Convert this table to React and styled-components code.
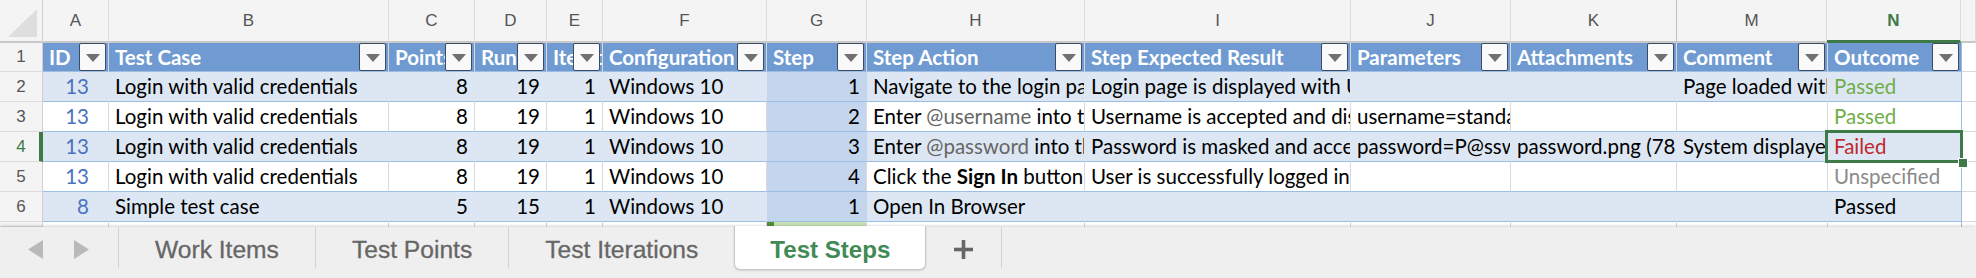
import React from 'react';
import styled, { createGlobalStyle } from 'styled-components';

const GlobalStyle = createGlobalStyle`
  html, body { margin: 0; padding: 0; background: #fff; overflow: hidden; }
  body { width: 1976px; height: 278px; }
`;

const BAND = '#dde7f3';
const LINE = '#9ebde3';
const GRID = '#d9d9d9';
const GREEN = '#3d7a48';

const cols = [
  { id: 'A', w: 66, title: 'ID', align: 'right', pr: 19 },
  { id: 'B', w: 280, title: 'Test Case' },
  { id: 'C', w: 86, title: 'Points', align: 'right' },
  { id: 'D', w: 72, title: 'Run', align: 'right' },
  { id: 'E', w: 56, title: 'Iteration', align: 'right' },
  { id: 'F', w: 164, title: 'Configuration' },
  { id: 'G', w: 100, title: 'Step', align: 'right', step: true },
  { id: 'H', w: 218, title: 'Step Action' },
  { id: 'I', w: 266, title: 'Step Expected Result' },
  { id: 'J', w: 160, title: 'Parameters' },
  { id: 'K', w: 166, title: 'Attachments' },
  { id: 'M', w: 151, title: 'Comment', hiddenBefore: true },
  { id: 'N', w: 134, title: 'Outcome', edge: true, active: true },
];

const Param = styled.span`color: #666;`;
const B = styled.b`font-weight: 700;`;

const rows = [
  {
    n: 2, band: true,
    cells: ['13', 'Login with valid credentials', '8', '19', '1', 'Windows 10', '1',
      'Navigate to the login page', 'Login page is displayed with Username and Password fields',
      '', '', 'Page loaded with no errors', 'Passed'],
    tone: 'pass',
  },
  {
    n: 3,
    cells: ['13', 'Login with valid credentials', '8', '19', '1', 'Windows 10', '2',
      <>Enter <Param>@username</Param> into the Username field</>,
      'Username is accepted and displayed', 'username=standard_user', '', '', 'Passed'],
    tone: 'pass',
  },
  {
    n: 4, band: true, selected: true,
    cells: ['13', 'Login with valid credentials', '8', '19', '1', 'Windows 10', '3',
      <>Enter <Param>@password</Param> into the Password field</>,
      'Password is masked and accepted', 'password=P@ssw0rd', 'password.png (78 KB)',
      'System displayed an error', 'Failed'],
    tone: 'fail',
  },
  {
    n: 5,
    cells: ['13', 'Login with valid credentials', '8', '19', '1', 'Windows 10', '4',
      <>Click the <B>Sign In</B> button</>, 'User is successfully logged in and redirected',
      '', '', '', 'Unspecified'],
    tone: 'none',
  },
  {
    n: 6, band: true, spillH: true,
    cells: ['8', 'Simple test case', '5', '15', '1', 'Windows 10', '1',
      'Open In Browser', '', '', '', '', 'Passed'],
    tone: 'plain',
  },
];

const tones = { pass: '#70ad47', fail: '#c0282d', none: '#8a8a8a', plain: '#000', id: '#4a72c0' };

const Page = styled.div`
  width: 1976px;
  height: 278px;
  display: flex;
  flex-direction: column;
  overflow: hidden;
`;

const Sheet = styled.div`
  display: flex;
  flex-direction: column;
  font-family: Lato, "Noto Sans", sans-serif;
  font-size: 20.5px;
`;

const Row = styled.div`
  --grid: ${p => (p.$band ? 'transparent' : GRID)};
  display: flex;
  height: ${p => p.$h || 30}px;
  background: ${p => (p.$band ? BAND : '#fff')};
`;

const Corner = styled.div`
  flex: 0 0 43px;
  box-sizing: border-box;
  background: #f4f4f4;
  border-right: 1px solid #cfcfcf;
  border-bottom: 2px solid #c8c8c8;
  display: flex;
  align-items: flex-end;
  justify-content: flex-end;
  padding: 0 5px 4px 0;
`;

const ColHead = styled.div`
  flex: ${p => (p.$w ? `0 0 ${p.$w}px` : '1 1 auto')};
  box-sizing: border-box;
  background: #f4f4f4;
  border-right: 1px solid #dcdcdc;
  border-left: ${p => (p.$hiddenBefore ? '1px solid #bdbdbd' : 'none')};
  margin-left: ${p => (p.$hiddenBefore ? '-1px' : '0')};
  border-bottom: ${p => (p.$active ? `3px solid ${GREEN}` : '2px solid #c8c8c8')};
  font-family: "Liberation Sans", Arial, sans-serif;
  font-size: 17px;
  color: ${p => (p.$active ? GREEN : '#555')};
  font-weight: ${p => (p.$active ? 700 : 400)};
  display: flex;
  align-items: center;
  justify-content: center;
  padding-top: ${p => (p.$active ? 1 : 0)}px;
`;

const RowHead = styled.div`
  flex: 0 0 43px;
  box-sizing: border-box;
  background: #f4f4f4;
  border-right: ${p => (p.$active ? `4px solid ${GREEN}` : '1px solid #cfcfcf')};
  border-bottom: 1px solid #dcdcdc;
  font-family: "Liberation Sans", Arial, sans-serif;
  font-size: 17px;
  color: ${p => (p.$active ? GREEN : '#555')};
  display: flex;
  align-items: center;
  justify-content: center;
  padding-left: ${p => (p.$active ? 3 : 0)}px;
`;

const Cell = styled.div`
  flex: 0 0 ${p => p.$w}px;
  box-sizing: border-box;
  position: relative;
  line-height: ${p => (p.$head ? 28 : 29)}px;
  padding: 0 ${p => p.$pr ?? 6}px 0 6px;
  text-align: ${p => p.$align || 'left'};
  white-space: nowrap;
  overflow: ${p => (p.$spill ? 'visible' : 'hidden')};
  border-right: 1px solid ${p => (p.$edge ? LINE : 'var(--grid)')};
  border-bottom: 1px solid ${LINE};
  background: ${p => (p.$head ? '#6f9bd2' : p.$step ? '#c3d6ed' : 'transparent')};
  color: ${p => (p.$head ? '#fff' : tones[p.$tone] || '#000')};
  font-weight: ${p => (p.$head ? 700 : 400)};

  ${p => p.$selected && `
    &::after {
      content: '';
      position: absolute;
      left: -3px; top: -2px; right: -2px; bottom: -2px;
      border: 3px solid ${GREEN};
      z-index: 3;
    }
    &::before {
      content: '';
      position: absolute;
      right: -7px; bottom: -7px;
      width: 8px; height: 8px;
      background: ${GREEN};
      border: 1px solid #fff;
      z-index: 4;
    }
  `}
`;

const Filler = styled.div`
  flex: 1 1 auto;
  background: #fff;
  border-bottom: 1px solid ${GRID};
`;

const Dropdown = styled.div`
  position: absolute;
  right: 2px;
  top: 0;
  width: 27px;
  height: 28px;
  box-sizing: border-box;
  border: 1px solid #3c4c63;
  border-radius: 2px;
  background: #f9f9f9;
  display: flex;
  align-items: center;
  justify-content: center;

  &::after {
    content: '';
    border-left: 7px solid transparent;
    border-right: 7px solid transparent;
    border-top: 8px solid #707070;
    margin-top: 1px;
  }
`;

const Peek = styled.div`
  flex: 0 0 ${p => p.$w}px;
  box-sizing: border-box;
  border-right: 1px solid ${p => (p.$edge ? LINE : GRID)};
  background: ${p => (p.$step ? '#c6e0b4' : 'transparent')};
  border-left: ${p => (p.$step ? `7px solid #4e8f3a` : 'none')};
`;

const TabBar = styled.div`
  flex: 1 1 auto;
  display: flex;
  align-items: flex-start;
  background: #efefef;
  box-shadow: 0 -1px 3px rgba(0, 0, 0, 0.18);
  position: relative;
  font-family: "Liberation Sans", Arial, sans-serif;
  font-size: 24.6px;
  color: #666;
  -webkit-text-stroke: 0.3px #666;
`;

const Arrows = styled.div`
  flex: 0 0 118px;
  height: 41px;
  display: flex;
  align-items: center;
  gap: 31px;
  padding: 4px 0 0 28px;
  box-sizing: border-box;
`;

const Tab = styled.div`
  height: 41px;
  box-sizing: border-box;
  display: flex;
  align-items: center;
  padding: 4px 36px 0 36px;
  border-left: 1px solid #d2d2d2;
  ${p => p.$active && `
    background: #fff;
    color: #418a55;
    -webkit-text-stroke: 0;
    font-weight: 700;
    font-size: 24.1px;
    padding: 4px 35px 0 35px;
    border-left-color: #c6c6c6;
    border-right: 1px solid #c6c6c6;
    border-bottom: 1px solid #c6c6c6;
    border-radius: 0 0 6px 6px;
    box-shadow: 0 1px 2px rgba(0,0,0,0.12);
    margin-top: -1px;
    height: 44px;
  `}
`;

const AddTab = styled.div`
  flex: 0 0 76px;
  height: 41px;
  display: flex;
  align-items: center;
  justify-content: center;
  padding-top: 4px;
  box-sizing: border-box;
  border-right: 1px solid #d2d2d2;
`;

const Arrow = ({ left }) => (
  <svg width="15" height="19" viewBox="0 0 15 19">
    <polygon points={left ? '15,0 0,9.5 15,19' : '0,0 15,9.5 0,19'} fill="#b9b9b9" />
  </svg>
);

const Plus = () => (
  <svg width="21" height="21" viewBox="0 0 21 21">
    <rect x="8.7" y="1" width="3.6" height="19" fill="#666" />
    <rect x="1" y="8.7" width="19" height="3.6" fill="#666" />
  </svg>
);

const CornerMark = () => (
  <svg width="29" height="28" viewBox="0 0 29 28">
    <polygon points="29,0 29,28 0,28" fill="#dedede" />
  </svg>
);

export default function App() {
  return (
    <Page>
      <GlobalStyle />
      <Sheet>
        <Row $h={43}>
          <Corner><CornerMark /></Corner>
          {cols.map(c => (
            <ColHead key={c.id} $w={c.w} $active={c.active} $hiddenBefore={c.hiddenBefore}>{c.id}</ColHead>
          ))}
          <ColHead />
        </Row>

        <Row $h={29}>
          <RowHead>1</RowHead>
          {cols.map(c => (
            <Cell key={c.id} $w={c.w} $head $edge={c.edge}>
              {c.title}
              <Dropdown />
            </Cell>
          ))}
          <Filler />
        </Row>

        {rows.map(r => (
          <Row key={r.n} $band={r.band}>
            <RowHead $active={r.selected}>{r.n}</RowHead>
            {cols.map((c, i) => {
              const last = i === cols.length - 1;
              return (
                <Cell
                  key={c.id}
                  $w={c.w}
                  $align={c.align}
                  $pr={c.pr}
                  $step={c.step}
                  $edge={c.edge}
                  $tone={i === 0 ? 'id' : last ? r.tone : undefined}
                  $spill={(r.spillH && c.id === 'H') || (last && r.selected)}
                  $selected={last && r.selected}
                >
                  {r.cells[i]}
                </Cell>
              );
            })}
            <Filler />
          </Row>
        ))}

        <Row $h={5}>
          <RowHead />
          {cols.map(c => (
            <Peek key={c.id} $w={c.w} $step={c.step} $edge={c.edge} />
          ))}
        </Row>
      </Sheet>

      <TabBar>
        <Arrows>
          <Arrow left />
          <Arrow />
        </Arrows>
        <Tab>Work Items</Tab>
        <Tab>Test Points</Tab>
        <Tab>Test Iterations</Tab>
        <Tab $active>Test Steps</Tab>
        <AddTab><Plus /></AddTab>
      </TabBar>
    </Page>
  );
}
